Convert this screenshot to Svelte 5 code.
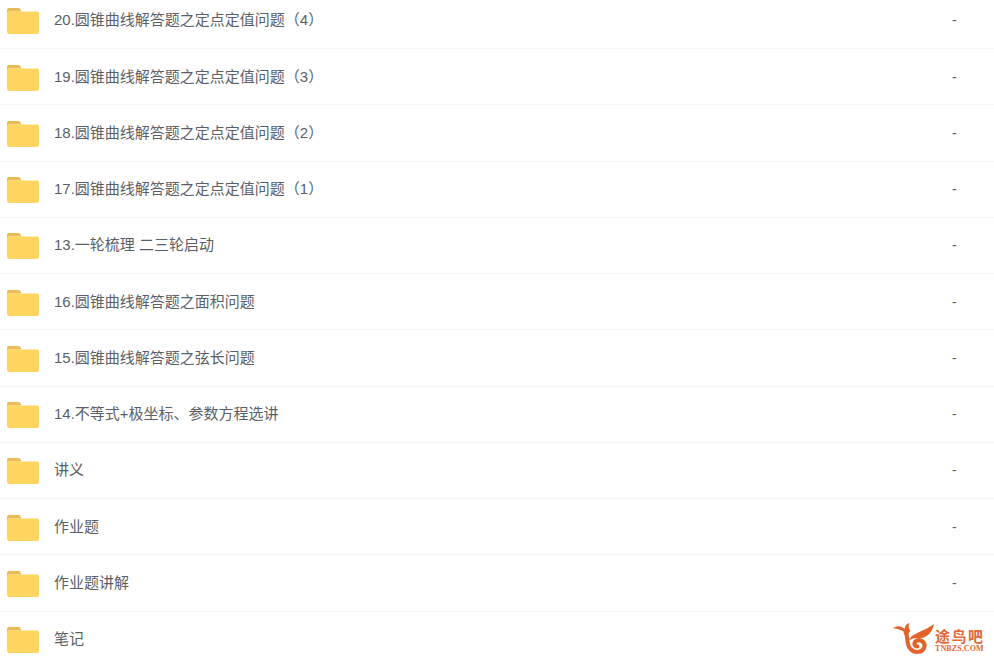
<script>
  const rows = [
    { name: '20.圆锥曲线解答题之定点定值问题（4）', size: '-' },
    { name: '19.圆锥曲线解答题之定点定值问题（3）', size: '-' },
    { name: '18.圆锥曲线解答题之定点定值问题（2）', size: '-' },
    { name: '17.圆锥曲线解答题之定点定值问题（1）', size: '-' },
    { name: '13.一轮梳理 二三轮启动', size: '-' },
    { name: '16.圆锥曲线解答题之面积问题', size: '-' },
    { name: '15.圆锥曲线解答题之弦长问题', size: '-' },
    { name: '14.不等式+极坐标、参数方程选讲', size: '-' },
    { name: '讲义', size: '-' },
    { name: '作业题', size: '-' },
    { name: '作业题讲解', size: '-' },
    { name: '笔记', size: '' }
  ];
</script>

<div class="page">
  <ul class="list">
    {#each rows as row}
      <li class="row">
        <svg class="folder" viewBox="0 0 32 26" width="32" height="26" aria-hidden="true">
          <path d="M0 2a2 2 0 0 1 2-2h9.5a2 2 0 0 1 1.7 1l1.3 2.5H2L0 5z" fill="#e8bb55" />
          <path d="M0 5a1.5 1.5 0 0 1 1.5-1.5H30a2 2 0 0 1 2 2V24a2 2 0 0 1-2 2H2a2 2 0 0 1-2-2z" fill="#ffd45f" />
        </svg>
        <span class="name">{row.name}</span>
        <span class="size">{row.size}</span>
      </li>
    {/each}
  </ul>

  <div class="logo">
    <svg viewBox="0 0 44 34" width="44" height="34" aria-hidden="true">
      <path d="M1 6 C6 3 10 4 12.5 7 C13 4 14.5 1.5 17.5 1 C16 3.5 16.5 6.5 18.5 9 C17 10 16.5 11 16.5 13 C13 9.5 7 7 1 6 Z" fill="#e2622a" />
      <path d="M13.5 10 C16.5 15 14 22 18 26.5 C22 31.5 30.5 31 32.5 25 C33.5 19 26.5 16.5 23.5 19.5 C21.5 21.5 22.5 24.5 25.5 24.5" fill="none" stroke="#e2622a" stroke-width="4" stroke-linecap="round" />
      <path d="M16 19 C20 11 31 10 42 2 C40.5 10 35 16.5 27 16 C22.5 15.5 19 16.5 16 19 Z" fill="#e2622a" />
    </svg>
    <div class="brand">
      <span class="cn">途鸟吧</span>
      <span class="en">TNBZS.COM</span>
    </div>
  </div>
</div>

<style>
  :global(body) {
    margin: 0;
    background: #fff;
  }
  .page {
    position: relative;
    width: 994px;
    height: 660px;
    overflow: hidden;
    font-family: "Liberation Sans", "Noto Sans CJK SC", sans-serif;
  }
  .list {
    list-style: none;
    margin: -7.2px 0 0;
    padding: 0;
  }
  .row {
    box-sizing: border-box;
    height: 56.25px;
    display: flex;
    align-items: center;
    border-bottom: 1px solid #f5f5f6;
    padding-left: 7px;
  }
  .folder {
    flex: none;
    margin-top: 2px;
  }
  .name {
    margin: 0 0 3px 15px;
    font-size: 15px;
    color: #5a5f67;
    flex: 1;
    white-space: pre;
  }
  .size {
    width: 42px;
    font-size: 14px;
    color: #5a5f67;
  }
  .logo {
    position: absolute;
    left: 892px;
    top: 622px;
    display: flex;
    align-items: flex-end;
    gap: 0;
  }
  .brand {
    display: flex;
    flex-direction: column;
    margin-left: -1px;
    color: #e2683a;
    line-height: 1;
    padding-bottom: 3px;
  }
  .cn {
    font-size: 15px;
    letter-spacing: 1.5px;
    font-weight: 700;
  }
  .en {
    font-family: "Liberation Serif", serif;
    font-size: 8px;
    font-weight: 700;
    letter-spacing: 0.1px;
    margin-top: 1px;
  }
</style>
